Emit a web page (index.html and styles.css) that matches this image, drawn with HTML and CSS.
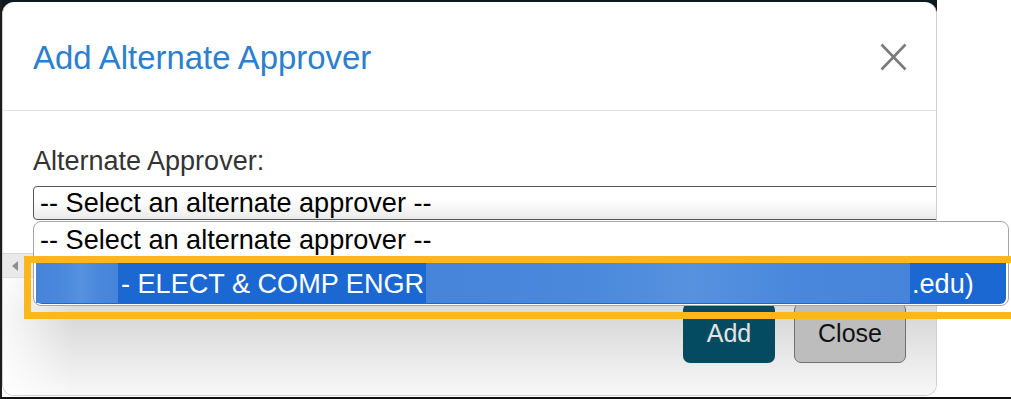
FILE: index.html
```html
<!DOCTYPE html>
<html lang="en">
<head>
<meta charset="utf-8">
<title>Add Alternate Approver</title>
<link rel="stylesheet" href="styles.css">
</head>
<body>
<div class="frame">
  <div class="backdrop">
    <div class="modal">
      <div class="modal-header">
        <h2 class="modal-title">Add Alternate Approver</h2>
        <button class="close-x" aria-label="Close">
          <svg width="27" height="28" viewBox="0 0 27 28"><path d="M1.5 1.5 L25.5 26.5 M25.5 1.5 L1.5 26.5" stroke="#7b7b7b" stroke-width="2.6" fill="none"/></svg>
        </button>
      </div>
      <div class="modal-body">
        <label class="field-label">Alternate Approver:</label>
        <div class="select">-- Select an alternate approver --</div>
        <div class="hscroll"><span class="arrow-left"></span></div>
      </div>
      <div class="modal-footer">
        <button class="btn btn-add">Add</button>
        <button class="btn btn-close">Close</button>
      </div>
    </div>
  </div>

  <div class="dropdown">
    <div class="option">-- Select an alternate approver --</div>
    <div class="option option-selected">
      <span class="blur blur-left"></span>
      <span class="opt-text">- ELECT &amp; COMP ENGR</span>
      <span class="blur blur-right"></span>
      <span class="opt-tail">.edu)</span>
    </div>
  </div>

  <div class="highlight"></div>
</div>
</body>
</html>
```

FILE: styles.css
```css
* { box-sizing: border-box; }

html, body {
  margin: 0;
  padding: 0;
  background: #fff;
}

body {
  font-family: "Liberation Sans", Arial, sans-serif;
}

.frame {
  position: relative;
  width: 1011px;
  height: 399px;
  overflow: hidden;
  background: #fff;
  border-left: 2px solid #1c1c1c;
  border-bottom: 2px solid #111;
}

.backdrop {
  width: 935px;
  height: 397px;
  padding-top: 2px;
  background: linear-gradient(#0b1a20 0, #0b1a20 16px, transparent 16px);
}

.modal {
  width: 935px;
  height: 394px;
  background: #fff;
  border: 1px solid #cfcfcf;
  border-top: none;
  border-radius: 12px;
  overflow: hidden;
  display: flex;
  flex-direction: column;
}

.modal-header {
  height: 108px;
  flex: none;
  margin-top: 1px;
  padding: 0 29px 0 30px;
  display: flex;
  align-items: center;
  justify-content: space-between;
  border-bottom: 1px solid #e3e3e3;
}

.modal-title {
  margin: 0;
  font-weight: normal;
  font-size: 32.9px;
  line-height: 37px;
  margin-top: 2px;
  color: #2d7fce;
}

.close-x {
  border: none;
  background: none;
  padding: 0;
  width: 27px;
  height: 28px;
  display: flex;
}

.modal-body {
  flex: none;
  padding: 35px 30px 0 30px;
}

.field-label {
  display: block;
  font-size: 27px;
  line-height: 31px;
  color: #333;
  margin-bottom: 9px;
}

.select {
  height: 34px;
  margin-right: -80px;
  border: 1px solid #555;
  border-radius: 4px;
  padding-left: 6px;
  font-size: 27.1px;
  line-height: 32px;
  color: #000;
  background: linear-gradient(#fff 0, #fff 40%, #ebebeb 100%);
  white-space: nowrap;
}

.hscroll {
  height: 25px;
  margin: 33px -30px 0 -31px;
  background: #e9e9e9;
  border-top: 1px solid #d6d6d6;
  border-bottom: 1px solid #dcdcdc;
  padding-left: 10px;
  display: flex;
  align-items: center;
}

.arrow-left {
  width: 0;
  height: 0;
  border-top: 5px solid transparent;
  border-bottom: 5px solid transparent;
  border-right: 6px solid #8e8e8e;
}

.modal-footer {
  flex: 1;
  display: flex;
  justify-content: flex-end;
  align-items: flex-end;
  gap: 19px;
  padding: 0 30px 32px 0;
  background:
    linear-gradient(to right, rgba(255,255,255,0.85) 0, rgba(255,255,255,0) 70px),
    linear-gradient(#ededed 0, #d9d9d9 40px, #f8f8f8 100%);
}

.btn {
  height: 60px;
  border-radius: 7px;
  font-family: "Liberation Sans", Arial, sans-serif;
  font-size: 25px;
  padding: 0;
}

.btn-add {
  width: 92px;
  background: #044b62;
  color: #e4e4e4;
  border: none;
}

.btn-close {
  width: 112px;
  background: #bdbdbd;
  color: #111;
  border: 1px solid #707070;
}

.dropdown {
  position: absolute;
  left: 31px;
  top: 221px;
  width: 976px;
  height: 85px;
  background: #fff;
  border: 1px solid #a6a6a6;
  border-radius: 8px;
  padding: 0 2px 1px 2px;
  overflow: hidden;
  font-size: 27.1px;
  color: #000;
  white-space: nowrap;
}

.option {
  height: 36px;
  line-height: 36px;
  padding-left: 4px;
}

.option-selected {
  height: 46px;
  padding-left: 0;
  display: flex;
  align-items: stretch;
  background: #1b68d3;
  color: #fff;
  border-radius: 0 0 6px 6px;
}

.blur {
  display: block;
  margin-bottom: 1px;
  background: linear-gradient(90deg, #4684da 0, #4b89dc 35%, #5792df 55%, #4a88dc 75%, #4584da 100%);
}

.blur-left {
  width: 82px;
}

.blur-right {
  width: 484px;
}

.opt-text {
  width: 308px;
  padding: 8px 0 0 3px;
  line-height: 36px;
}

.opt-tail {
  padding: 8px 0 0 2px;
  line-height: 36px;
}

.highlight {
  position: absolute;
  left: 22px;
  top: 256px;
  width: 1010px;
  height: 63px;
  border: 7px solid #fdb71d;
}
```
